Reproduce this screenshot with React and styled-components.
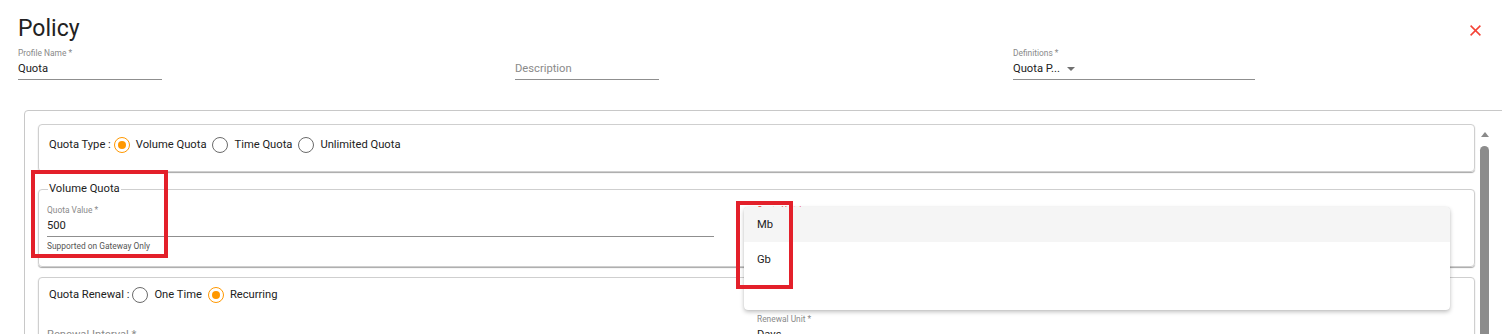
import React from 'react';
import styled, { createGlobalStyle } from 'styled-components';

const Global = createGlobalStyle`
  html, body { margin: 0; padding: 0; background: #fff; }
  body { font-family: Roboto, "Noto Sans", Arial, sans-serif; color: #222; overflow: hidden; }
  * { box-sizing: border-box; }
`;

const Page = styled.div`
  position: relative;
  width: 1502px;
  height: 334px;
  overflow: hidden;
`;

const Header = styled.header`
  display: flex;
  align-items: flex-start;
  justify-content: space-between;
  padding: 15px 21px 0 18px;
`;

const Title = styled.h1`
  margin: 0;
  font-size: 23px;
  line-height: 27px;
  font-weight: 400;
  color: #222;
`;

const CloseButton = styled.button`
  border: 0;
  background: none;
  padding: 0;
  margin-top: 10px;
  width: 11px;
  height: 11px;
  display: block;
  svg { display: block; }
`;

const FieldsRow = styled.div`
  display: grid;
  grid-template-columns: 497px 498px 1fr;
  padding: 6px 0 0 18px;
`;

const Field = styled.div`
  display: flex;
  flex-direction: column;
  width: ${p => p.$width || 'auto'};
`;

const Label = styled.div`
  height: 10px;
  font-size: 8.4px;
  line-height: 10px;
  color: ${p => (p.$error ? '#f44336' : '#8a8a8a')};
  margin-bottom: 4px;
  white-space: nowrap;
`;

const Value = styled.div`
  display: flex;
  align-items: center;
  font-size: 11.2px;
  line-height: 14px;
  padding-bottom: 2.5px;
  border-bottom: 1px solid #8f8f8f;
  color: ${p => (p.$placeholder ? '#8a8a8a' : '#222')};
  white-space: nowrap;
`;

const Caret = styled.span`
  display: inline-block;
  width: 0;
  height: 0;
  margin-left: 7px;
  border-left: 4px solid transparent;
  border-right: 4px solid transparent;
  border-top: 4px solid #707070;
`;

const Helper = styled.div`
  margin-top: 4px;
  font-size: 8.4px;
  line-height: 10px;
  color: #555;
`;

const Container = styled.div`
  display: flex;
  align-items: flex-start;
  width: 1500px;
  height: 260px;
  margin: 30.5px 0 0 24px;
  padding: 13px 0 0 13px;
  border: 1px solid #c8c8c8;
  border-radius: 4px 0 0 0;
`;

const Content = styled.div`
  width: 1437px;
  display: flex;
  flex-direction: column;
  gap: 10px;
`;

const Card = styled.section`
  border: 1px solid #cfcfcf;
  border-radius: 4px;
  box-shadow: 0 1px 1px rgba(0, 0, 0, 0.35);
  padding: ${p => p.$pad || '11.5px 8px 18.5px'};
`;

const FieldSet = styled.fieldset`
  margin: 0;
  min-width: 0;
  border: 1px solid #cfcfcf;
  border-radius: 4px;
  box-shadow: 0 1px 1px rgba(0, 0, 0, 0.35);
  padding: 9px 8px 15px;
`;

const Legend = styled.legend`
  margin-left: 1px;
  padding: 0 1px;
  font-size: 11.2px;
  line-height: 14px;
  color: #222;
`;

const RadioRow = styled.div`
  display: flex;
  align-items: center;
  padding-left: 2px;
  height: 16px;
  font-size: 11.2px;
  line-height: 16px;
  color: #222;
`;

const GroupLabel = styled.span`
  margin-right: 3px;
`;

const Radio = styled.span`
  position: relative;
  flex: none;
  width: 16px;
  height: 16px;
  border-radius: 50%;
  border: 1.5px solid ${p => (p.$checked ? '#ff9800' : '#6b6b6b')};
  margin-right: 6px;
  &::after {
    content: '';
    display: ${p => (p.$checked ? 'block' : 'none')};
    position: absolute;
    left: 50%;
    top: 50%;
    width: 8px;
    height: 8px;
    margin: -4px 0 0 -4px;
    border-radius: 50%;
    background: #ff9800;
  }
`;

const OptionText = styled.span`
  margin-right: 6px;
`;

const TwoCol = styled.div`
  display: grid;
  grid-template-columns: 667px 667px;
  column-gap: 43px;
  margin-top: ${p => p.$top || '0'};
`;

const ScrollTrack = styled.div`
  margin-left: 5px;
  margin-top: -4px;
  width: 9px;
  display: flex;
  flex-direction: column;
  align-items: center;
  padding-top: 12px;
`;

const ScrollArrow = styled.span`
  width: 0;
  height: 0;
  border-left: 4px solid transparent;
  border-right: 4px solid transparent;
  border-bottom: 5px solid #8a8a8a;
`;

const ScrollThumb = styled.span`
  margin-top: 9px;
  width: 9px;
  height: 400px;
  border-radius: 5px;
  background: #8c8c8c;
`;

const Menu = styled.ul`
  position: absolute;
  left: 744px;
  top: 207px;
  width: 706px;
  height: 103px;
  margin: 0;
  padding: 0;
  list-style: none;
  background: #fff;
  border-radius: 4px;
  box-shadow: 0 2px 4px rgba(0, 0, 0, 0.25), 0 0 1px rgba(0, 0, 0, 0.15);
  overflow: hidden;
  z-index: 2;
`;

const MenuItem = styled.li`
  height: 35px;
  display: flex;
  align-items: center;
  padding-left: 13px;
  font-size: 11.2px;
  color: #222;
  background: ${p => (p.$active ? '#f5f5f5' : '#fff')};
`;

const Annotation = styled.div`
  position: absolute;
  border: 4px solid #e3202a;
  z-index: 3;
  pointer-events: none;
`;

function RadioOption({ checked, children }) {
  return (
    <>
      <Radio $checked={checked} />
      <OptionText>{children}</OptionText>
    </>
  );
}

export default function App() {
  return (
    <Page>
      <Global />
      <Header>
        <Title>Policy</Title>
        <CloseButton aria-label="Close">
          <svg width="11" height="11" viewBox="0 0 11 11">
            <path d="M0.6 0.6 L10.4 10.4 M10.4 0.6 L0.6 10.4" stroke="#f44336" strokeWidth="1.5" fill="none" />
          </svg>
        </CloseButton>
      </Header>

      <FieldsRow>
        <Field $width="144px">
          <Label>Profile Name *</Label>
          <Value>Quota</Value>
        </Field>
        <Field $width="144px">
          <Label />
          <Value $placeholder>Description</Value>
        </Field>
        <Field $width="242px">
          <Label>Definitions *</Label>
          <Value>
            Quota P...
            <Caret />
          </Value>
        </Field>
      </FieldsRow>

      <Container>
        <Content>
          <Card>
            <RadioRow>
              <GroupLabel>Quota Type :</GroupLabel>
              <RadioOption checked>Volume Quota</RadioOption>
              <RadioOption>Time Quota</RadioOption>
              <RadioOption>Unlimited Quota</RadioOption>
            </RadioRow>
          </Card>

          <FieldSet>
            <Legend>Volume Quota</Legend>
            <TwoCol>
              <Field>
                <Label>Quota Value *</Label>
                <Value>500</Value>
                <Helper>Supported on Gateway Only</Helper>
              </Field>
              <Field>
                <Label $error>Quota Unit *</Label>
                <Value>Mb</Value>
              </Field>
            </TwoCol>
          </FieldSet>

          <Card $pad="9px 8px 20px">
            <RadioRow>
              <GroupLabel>Quota Renewal :</GroupLabel>
              <RadioOption>One Time</RadioOption>
              <RadioOption checked>Recurring</RadioOption>
            </RadioRow>
            <TwoCol $top="11px">
              <Field>
                <Label />
                <Value $placeholder>Renewal Interval *</Value>
              </Field>
              <Field>
                <Label>Renewal Unit *</Label>
                <Value>Days</Value>
              </Field>
            </TwoCol>
          </Card>
        </Content>
        <ScrollTrack>
          <ScrollArrow />
          <ScrollThumb />
        </ScrollTrack>
      </Container>

      <Menu role="listbox">
        <MenuItem $active>Mb</MenuItem>
        <MenuItem>Gb</MenuItem>
      </Menu>

      <Annotation style={{ left: 31, top: 170, width: 137, height: 88 }} />
      <Annotation style={{ left: 736, top: 201, width: 57, height: 88 }} />
    </Page>
  );
}
